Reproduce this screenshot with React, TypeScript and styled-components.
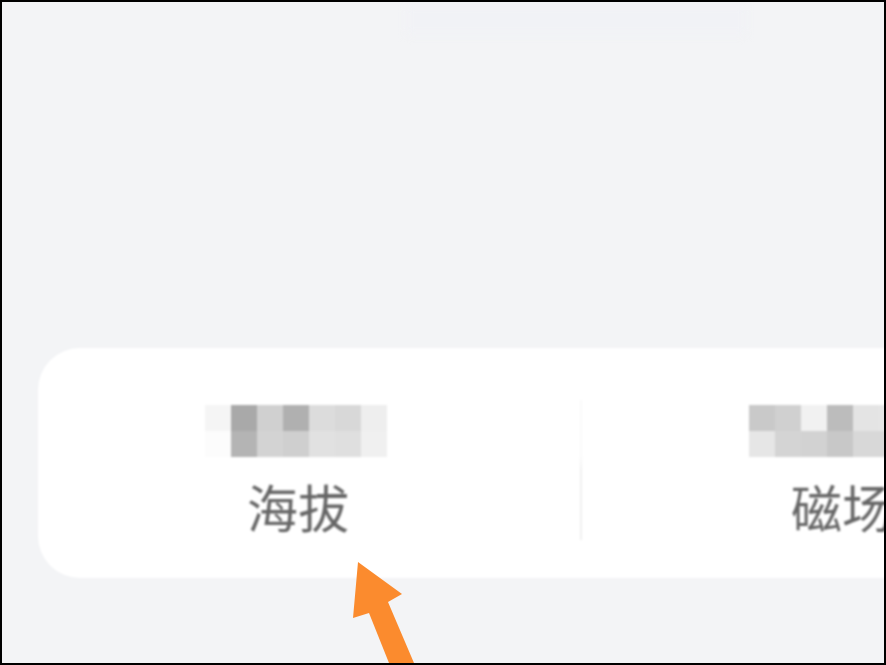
import React from "react";
import styled, { createGlobalStyle } from "styled-components";

const GlobalStyle = createGlobalStyle`
  html,
  body {
    margin: 0;
    padding: 0;
    background: #f3f4f6;
  }
`;

type StatType = {
  label: string;
  cells: string[];
};

const stats: StatType[] = [
  {
    label: "海拔",
    cells: [
      "#f5f5f5", "#a9a9a9", "#d0d0d0", "#b0b0b0", "#dcdcdc", "#d8d8d8", "#eeeeee",
      "#fcfcfc", "#b4b4b4", "#d3d3d3", "#cfcfcf", "#e1e1e1", "#dfdfdf", "#f0f0f0",
    ],
  },
  {
    label: "磁场",
    cells: [
      "#c9c9c9", "#d0d0d0", "#f1f1f1", "#bcbcbc", "#e4e4e4", "#e6e6e6", "#e6e6e6",
      "#e6e6e6", "#d4d4d4", "#d2d2d2", "#c8c8c8", "#d8d8d8", "#d8d8d8", "#d8d8d8",
    ],
  },
];

const Stat = ({ label, cells }: StatType) => (
  <StyledStat>
    <Mosaic>
      {cells.map((c, i) => (
        <Cell key={i} $color={c} />
      ))}
    </Mosaic>
    <Label>{label}</Label>
  </StyledStat>
);

export default function App() {
  return (
    <Frame>
      <GlobalStyle />
      <Smudge />
      <Card>
        <Stat {...stats[0]} />
        <Divider />
        <Stat {...stats[1]} />
      </Card>
      <Arrow viewBox="0 0 70 105" aria-hidden="true">
        <path d="M7 2 L51 34 L37 42 L63 103 L38 103 L18 53 L2 58 Z" fill="#fb8b2e" />
      </Arrow>
    </Frame>
  );
}

const Frame = styled.div`
  position: relative;
  box-sizing: border-box;
  width: 886px;
  height: 665px;
  border: 2px solid #000;
  background: #f3f4f6;
  overflow: hidden;
  font-family: "Noto Sans CJK SC", "Noto Sans", sans-serif;
`;

const Smudge = styled.div`
  width: 340px;
  height: 30px;
  margin: 3px 0 0 404px;
  background: #f1f2f6;
  filter: blur(4px);
`;

const Card = styled.div`
  display: flex;
  width: 1090px;
  height: 230px;
  margin: 313px 0 0 36px;
  background: #fff;
  border-radius: 42px 0 0 42px;
  filter: blur(1px);
`;

const StyledStat = styled.div`
  display: flex;
  flex-direction: column;
  align-items: center;
  width: 520px;
  padding-top: 57px;
`;

const Mosaic = styled.div`
  display: grid;
  grid-template-columns: repeat(7, 26px);
  grid-auto-rows: 26px;
  margin-right: 4px;
`;

const Cell = styled.div<{ $color: string }>`
  background: ${(props) => props.$color};
`;

const Label = styled.div`
  margin-top: 16px;
  font-size: 51px;
  line-height: 66px;
  color: #666;
`;

const Divider = styled.div`
  align-self: flex-start;
  width: 2px;
  height: 140px;
  margin: 52px 0 0 22px;
  background: linear-gradient(#fafafa 0 40%, #f0f0f0 50% 100%);
`;

const Arrow = styled.svg`
  position: absolute;
  left: 349px;
  top: 558px;
  width: 70px;
  height: 105px;
  filter: blur(0.5px);
`;
